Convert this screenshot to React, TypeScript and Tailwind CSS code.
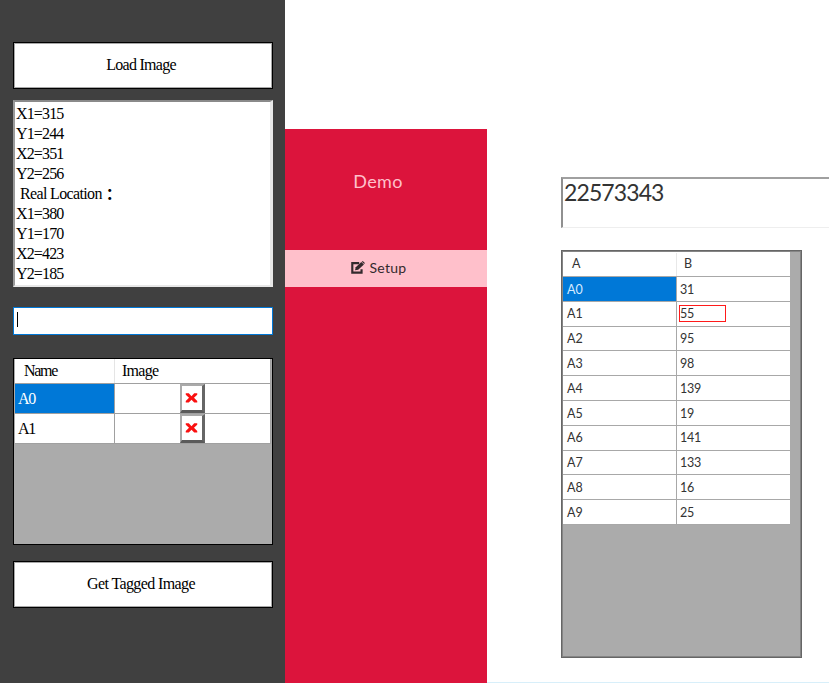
import React from "react";

const logLines = ["X1=315", "Y1=244", "X2=351", "Y2=256", "Real Location", "X1=380", "Y1=170", "X2=423", "Y2=185"];

const values: [string, string][] = [
  ["A0", "31"], ["A1", "55"], ["A2", "95"], ["A3", "98"], ["A4", "139"],
  ["A5", "19"], ["A6", "141"], ["A7", "133"], ["A8", "16"], ["A9", "25"],
];

function EditIcon() {
  return (
    <svg width="14" height="13" viewBox="0 0 13 12">
      <path d="M7.6 2H1.2v8.7h8.6V7.6" fill="none" stroke="currentColor" strokeWidth="2" />
      <path d="M3.7 8.6 4.4 5.7 9.6.9 12 3.1 6.7 8Z" fill="currentColor" />
      <path d="M10 .6 10.9 0 12.9 1.9 12.3 2.8Z" fill="currentColor" />
    </svg>
  );
}

function PanelButton({ children }: { children: React.ReactNode }) {
  return (
    <button className="flex h-[47px] w-[260px] shrink-0 items-center justify-center border border-black bg-white pr-1 pb-px shadow-[inset_0_0_0_1px_#a8a8a8]">
      {children}
    </button>
  );
}

function BrokenImage() {
  return (
    <div className="flex h-[29px] w-[25px] items-center justify-center border-t-2 border-r-[3px] border-b-[3px] border-l-2 border-t-[#aaa] border-r-[#666] border-b-[#5a5a5a] border-l-[#aaa] bg-white pr-px">
      <svg width="13" height="12" viewBox="0 0 12 11" className="mb-px">
        <path d="M.7 1.2H3.5L6 3.8 8.5 1.2H11.3V2.5L8.3 5.3 11.3 8.2V9.7H8.5L6 7.1 3.5 9.7H.7V8.2L3.7 5.3.7 2.5Z" fill="#fa1010" />
      </svg>
    </div>
  );
}

function TagRow({ name, selected = false }: { name: string; selected?: boolean }) {
  return (
    <div className="flex h-[30px] border-b border-[#a0a0a0] bg-white">
      <div className={`flex w-[100px] items-center border-r border-[#a0a0a0] pl-[3px] ${selected ? "bg-[#0078d7] text-white" : ""}`}>
        <span className="tracking-[-1.3px]">{name}</span>
      </div>
      <div className="flex flex-1 border-r border-[#a0a0a0] pl-[65px]">
        <BrokenImage />
      </div>
    </div>
  );
}

function TaggingPanel() {
  return (
    <aside className="flex h-full w-[285px] shrink-0 flex-col bg-[#404040] pt-[42px] pl-[13px] font-['Liberation_Serif','Noto_Sans_CJK_TC',serif] text-[16px] text-black">
      <PanelButton><span className="tracking-[-0.72px]">Load Image</span></PanelButton>
      <div className="mt-[11px] h-[187px] w-[260px] shrink-0 border-t-2 border-r-[3px] border-b-2 border-l-2 border-t-[#8a8a8a] border-r-[#e8e8e8] border-b-[#e8e8e8] border-l-[#9a9a9a] bg-white pt-0.5 pl-px tracking-[-0.86px]">
        {logLines.map((line, i) => (
          <div key={i} className="h-5 leading-5 whitespace-pre">
            {line === "Real Location" ? (
              <span className="flex items-center pl-1">
                <span className="tracking-[-0.65px]">{line}</span>
                <span className="pb-0.5 font-['Noto_Sans_CJK_TC',sans-serif] leading-[18px] font-bold">：</span>
              </span>
            ) : line}
          </div>
        ))}
      </div>
      <div className="mt-5 h-[28px] w-[260px] shrink-0 border border-[#0078d7] bg-white pt-1 pl-[3px]">
        <div className="h-[15px] w-px bg-black" />
      </div>
      <div className="mt-[23px] h-[187px] w-[260px] shrink-0 border border-black bg-[#ababab] pr-px pl-px">
        <div className="flex h-[25px] border-b border-[#a0a0a0] bg-white">
          <div className="flex w-[100px] items-center border-r border-[#e5e5e5] pl-[9px]"><span className="tracking-[-1.3px]">Name</span></div>
          <div className="flex flex-1 items-center border-r border-[#a0a0a0] pl-[7px]"><span className="tracking-[-0.75px]">Image</span></div>
        </div>
        <TagRow name="A0" selected />
        <TagRow name="A1" />
      </div>
      <div className="mt-4 flex"><PanelButton><span className="tracking-[-0.6px]">Get Tagged Image</span></PanelButton></div>
    </aside>
  );
}

function Sidebar() {
  return (
    <nav className="mt-[128.5px] flex w-[202px] shrink-0 flex-col bg-[#dc143c]">
      <div className="flex h-[121px] items-start justify-center pt-10 pr-[16px] text-[18px] leading-6 tracking-[0.3px] text-[#ffc0cb]">Demo</div>
      <div className="flex h-[37px] items-center justify-center gap-[4px] bg-[#ffc0cb] pr-[14px] pb-px text-[14px] text-[#332a2d]">
        <EditIcon />
        <span className="tracking-[0.3px]">Setup</span>
      </div>
    </nav>
  );
}

function DataGrid() {
  return (
    <div className="mt-[22px] h-[408px] w-[241px] border border-[#666] bg-[#ababab] shadow-[inset_0_0_0_1px_#858585]">
      <div className="flex w-[228px] flex-col pt-px pl-px text-[12.5px] text-[#333]">
        <div className="flex h-[25px] border-b border-[#a8a8a8] bg-white pt-px">
          <div className="flex w-[114px] items-center border-r border-[#e8e8e8] pl-[9px]">A</div>
          <div className="flex flex-1 items-center pl-[7px]">B</div>
        </div>
        {values.map(([name, value], i) => (
          <div key={name} className="flex h-[24.8px] border-b border-[#a8a8a8] bg-white">
            <div className={`flex w-[114px] items-center border-r border-[#a8a8a8] pt-0.5 pl-1 ${i === 0 ? "bg-[#0078d7] text-[#d5eaff]" : ""}`}>{name}</div>
            <div className="flex flex-1 items-center pl-0.5 tracking-[-0.2px]">
              {i === 1 ? (
                <span className="flex h-[17px] w-[47px] bg-[#ff1a1a] p-px">
                  <span className="flex flex-1 items-center bg-white pt-0.5">{value}</span>
                </span>
              ) : (
                <span className="pt-0.5 pl-px">{value}</span>
              )}
            </div>
          </div>
        ))}
      </div>
    </div>
  );
}

export default function App() {
  return (
    <div className="flex h-[683px] w-[829px] overflow-hidden bg-white">
      <TaggingPanel />
      <div className="flex min-w-0 flex-1 font-['Lato',sans-serif]">
        <Sidebar />
        <main className="flex min-w-0 flex-1 flex-col border-b border-[#d8effa] pt-[177px] pl-[74px]">
          <div className="h-[51px] shrink-0 border-t-2 border-b border-l-2 border-t-[#a0a0a0] border-b-[#eee] border-l-[#909090] pl-px text-[23px] leading-[27px] text-[#333]">
            <span className="tracking-[-0.9px]">22573343</span>
          </div>
          <DataGrid />
        </main>
      </div>
    </div>
  );
}
